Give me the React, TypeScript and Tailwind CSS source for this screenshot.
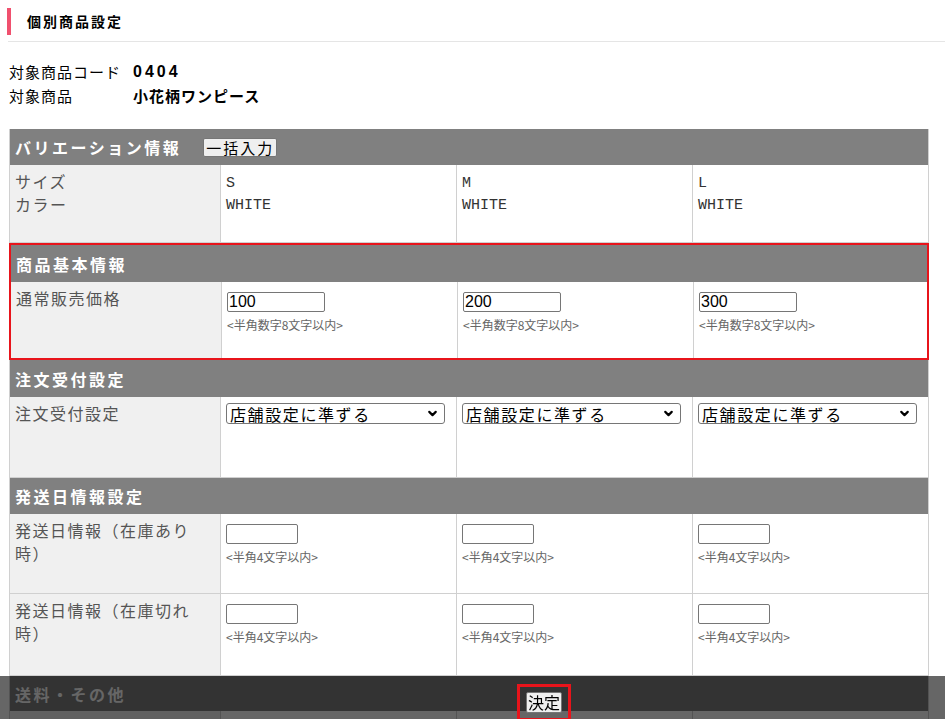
import { ChevronDown } from 'lucide-react'

const jp = "font-['Noto_Sans_CJK_JP','Noto_Sans',sans-serif]"
const mono = "font-['Liberation_Mono','Noto_Sans_CJK_JP',monospace]"

const variants = [
  { size: 'S', color: 'WHITE', price: '100' },
  { size: 'M', color: 'WHITE', price: '200' },
  { size: 'L', color: 'WHITE', price: '300' },
]

function SectionHeader({ children, height = 'h-[36px]' }: { children: React.ReactNode; height?: string }) {
  return (
    <div className={`${height} bg-[#808080] flex items-center px-[5px]`}>
      <span className="text-[16px] font-bold text-white tracking-[2.5px] leading-none">{children}</span>
    </div>
  )
}

function Row({
  label,
  height,
  children,
}: {
  label: React.ReactNode
  height: string
  children: (i: number) => React.ReactNode
}) {
  return (
    <div className={`grid grid-cols-[211px_236px_236px_1fr] border-b border-[#d0d0d0] ${height}`}>
      <div className="bg-[#f0f0f0] border-r border-[#d0d0d0] px-[5px] pt-[5px] text-[16px] leading-[23px] tracking-[1.5px] text-[#555]">
        {label}
      </div>
      {[0, 1, 2].map((i) => (
        <div key={i} className={`bg-white px-[5px] pt-[6px] ${i < 2 ? 'border-r border-[#d0d0d0]' : ''}`}>
          {children(i)}
        </div>
      ))}
    </div>
  )
}

function Hint({ children }: { children: React.ReactNode }) {
  return <div className="text-[12px] leading-[14px] text-[#666] mt-[6px]">{children}</div>
}

function TextBox({ value, width }: { value: string; width: string }) {
  return (
    <input
      readOnly
      value={value}
      className={`${width} h-[20px] border border-[#767676] rounded-[2px] bg-white px-[1px] text-[16px] leading-none text-black font-['Liberation_Sans',sans-serif] outline-none`}
    />
  )
}

function SelectBox() {
  return (
    <div className="w-[219px] h-[21px] border border-[#767676] rounded-[3px] bg-white flex items-center justify-between pl-[3px] pr-[5px]">
      <span className="text-[16px] leading-none tracking-[1.6px] text-black">店舗設定に準ずる</span>
      <ChevronDown className="w-[13px] h-[13px] text-black" strokeWidth={4} />
    </div>
  )
}

export default function App() {
  return (
    <div className={`${jp} bg-white min-h-[719px] w-[945px] pt-[8px] text-[#222]`}>
      {/* page title */}
      <div className="flex items-center h-[27px] ml-[7px]">
        <div className="w-[4px] h-[27px] bg-[#f0506e]" />
        <h1 className="ml-[16px] text-[14px] font-bold tracking-[2px] text-black">個別商品設定</h1>
      </div>
      <div className="ml-[8px] mt-[6px] border-b border-[#e5e5e5]" />

      {/* target product */}
      <div className="ml-[9px] mt-[18px] text-[15px] leading-[24px] text-black">
        <div className="flex">
          <span className="w-[124px] tracking-[1px]">対象商品コード</span>
          <span className="font-bold tracking-[3px] font-['Liberation_Sans',sans-serif] text-[16px]">0404</span>
        </div>
        <div className="flex">
          <span className="w-[124px] tracking-[1px]">対象商品</span>
          <span className="font-bold tracking-[1px]">小花柄ワンピース</span>
        </div>
      </div>

      {/* variation table */}
      <div className="ml-[9px] mt-[21px] w-[920px] border-x border-[#d0d0d0]">
        <div className="h-[36px] bg-[#808080] flex items-center px-[5px]">
          <span className="text-[16px] font-bold text-white tracking-[2.5px] leading-none">バリエーション情報</span>
          <button className="ml-[22px] h-[19px] px-[2px] bg-[#efefef] border border-[#767676] rounded-[2px] text-[15px] leading-none tracking-[2px] text-black">
            一括入力
          </button>
        </div>
        <Row label={<>サイズ<br />カラー</>} height="h-[78px]">
          {(i) => (
            <div className={`${mono} text-[15px] leading-[22px] text-[#333] mt-[2px]`}>
              {variants[i].size}
              <br />
              {variants[i].color}
            </div>
          )}
        </Row>

        {/* highlighted section */}
        <div className="border-2 border-[#e8141b] -mx-px">
          <SectionHeader height="h-[37px]">商品基本情報</SectionHeader>
          <Row label="通常販売価格" height="h-[76px] border-b-0">
            {(i) => (
              <>
                <TextBox value={variants[i].price} width="w-[98px]" />
                <Hint>&lt;半角数字8文字以内&gt;</Hint>
              </>
            )}
          </Row>
        </div>

        <SectionHeader height="h-[37px]">注文受付設定</SectionHeader>
        <Row label="注文受付設定" height="h-[81px]">
          {() => <SelectBox />}
        </Row>

        <SectionHeader>発送日情報設定</SectionHeader>
        <Row label="発送日情報（在庫あり時）" height="h-[80px]">
          {() => (
            <>
              <TextBox value="" width="w-[72px]" />
              <Hint>&lt;半角4文字以内&gt;</Hint>
            </>
          )}
        </Row>
        <Row label="発送日情報（在庫切れ時）" height="h-[82px]">
          {() => (
            <>
              <TextBox value="" width="w-[72px]" />
              <Hint>&lt;半角4文字以内&gt;</Hint>
            </>
          )}
        </Row>

        <SectionHeader height="h-[35px]">送料・その他</SectionHeader>
        <Row label="" height="h-[80px]">
          {() => <TextBox value="" width="w-[205px]" />}
        </Row>
      </div>

      {/* fixed action bar */}
      <div className="fixed left-0 right-0 bottom-0 h-[43px] bg-black/60 flex items-start pl-[517px] pt-[8px]">
        <div className="border-[3px] border-[#e8141b] px-[6px] pt-[3px] pb-[4px]">
          <button className="h-[21px] px-[1px] bg-[#efefef] border border-[#767676] rounded-[2px] text-[16px] leading-none text-black">
            決定
          </button>
        </div>
      </div>
    </div>
  )
}
